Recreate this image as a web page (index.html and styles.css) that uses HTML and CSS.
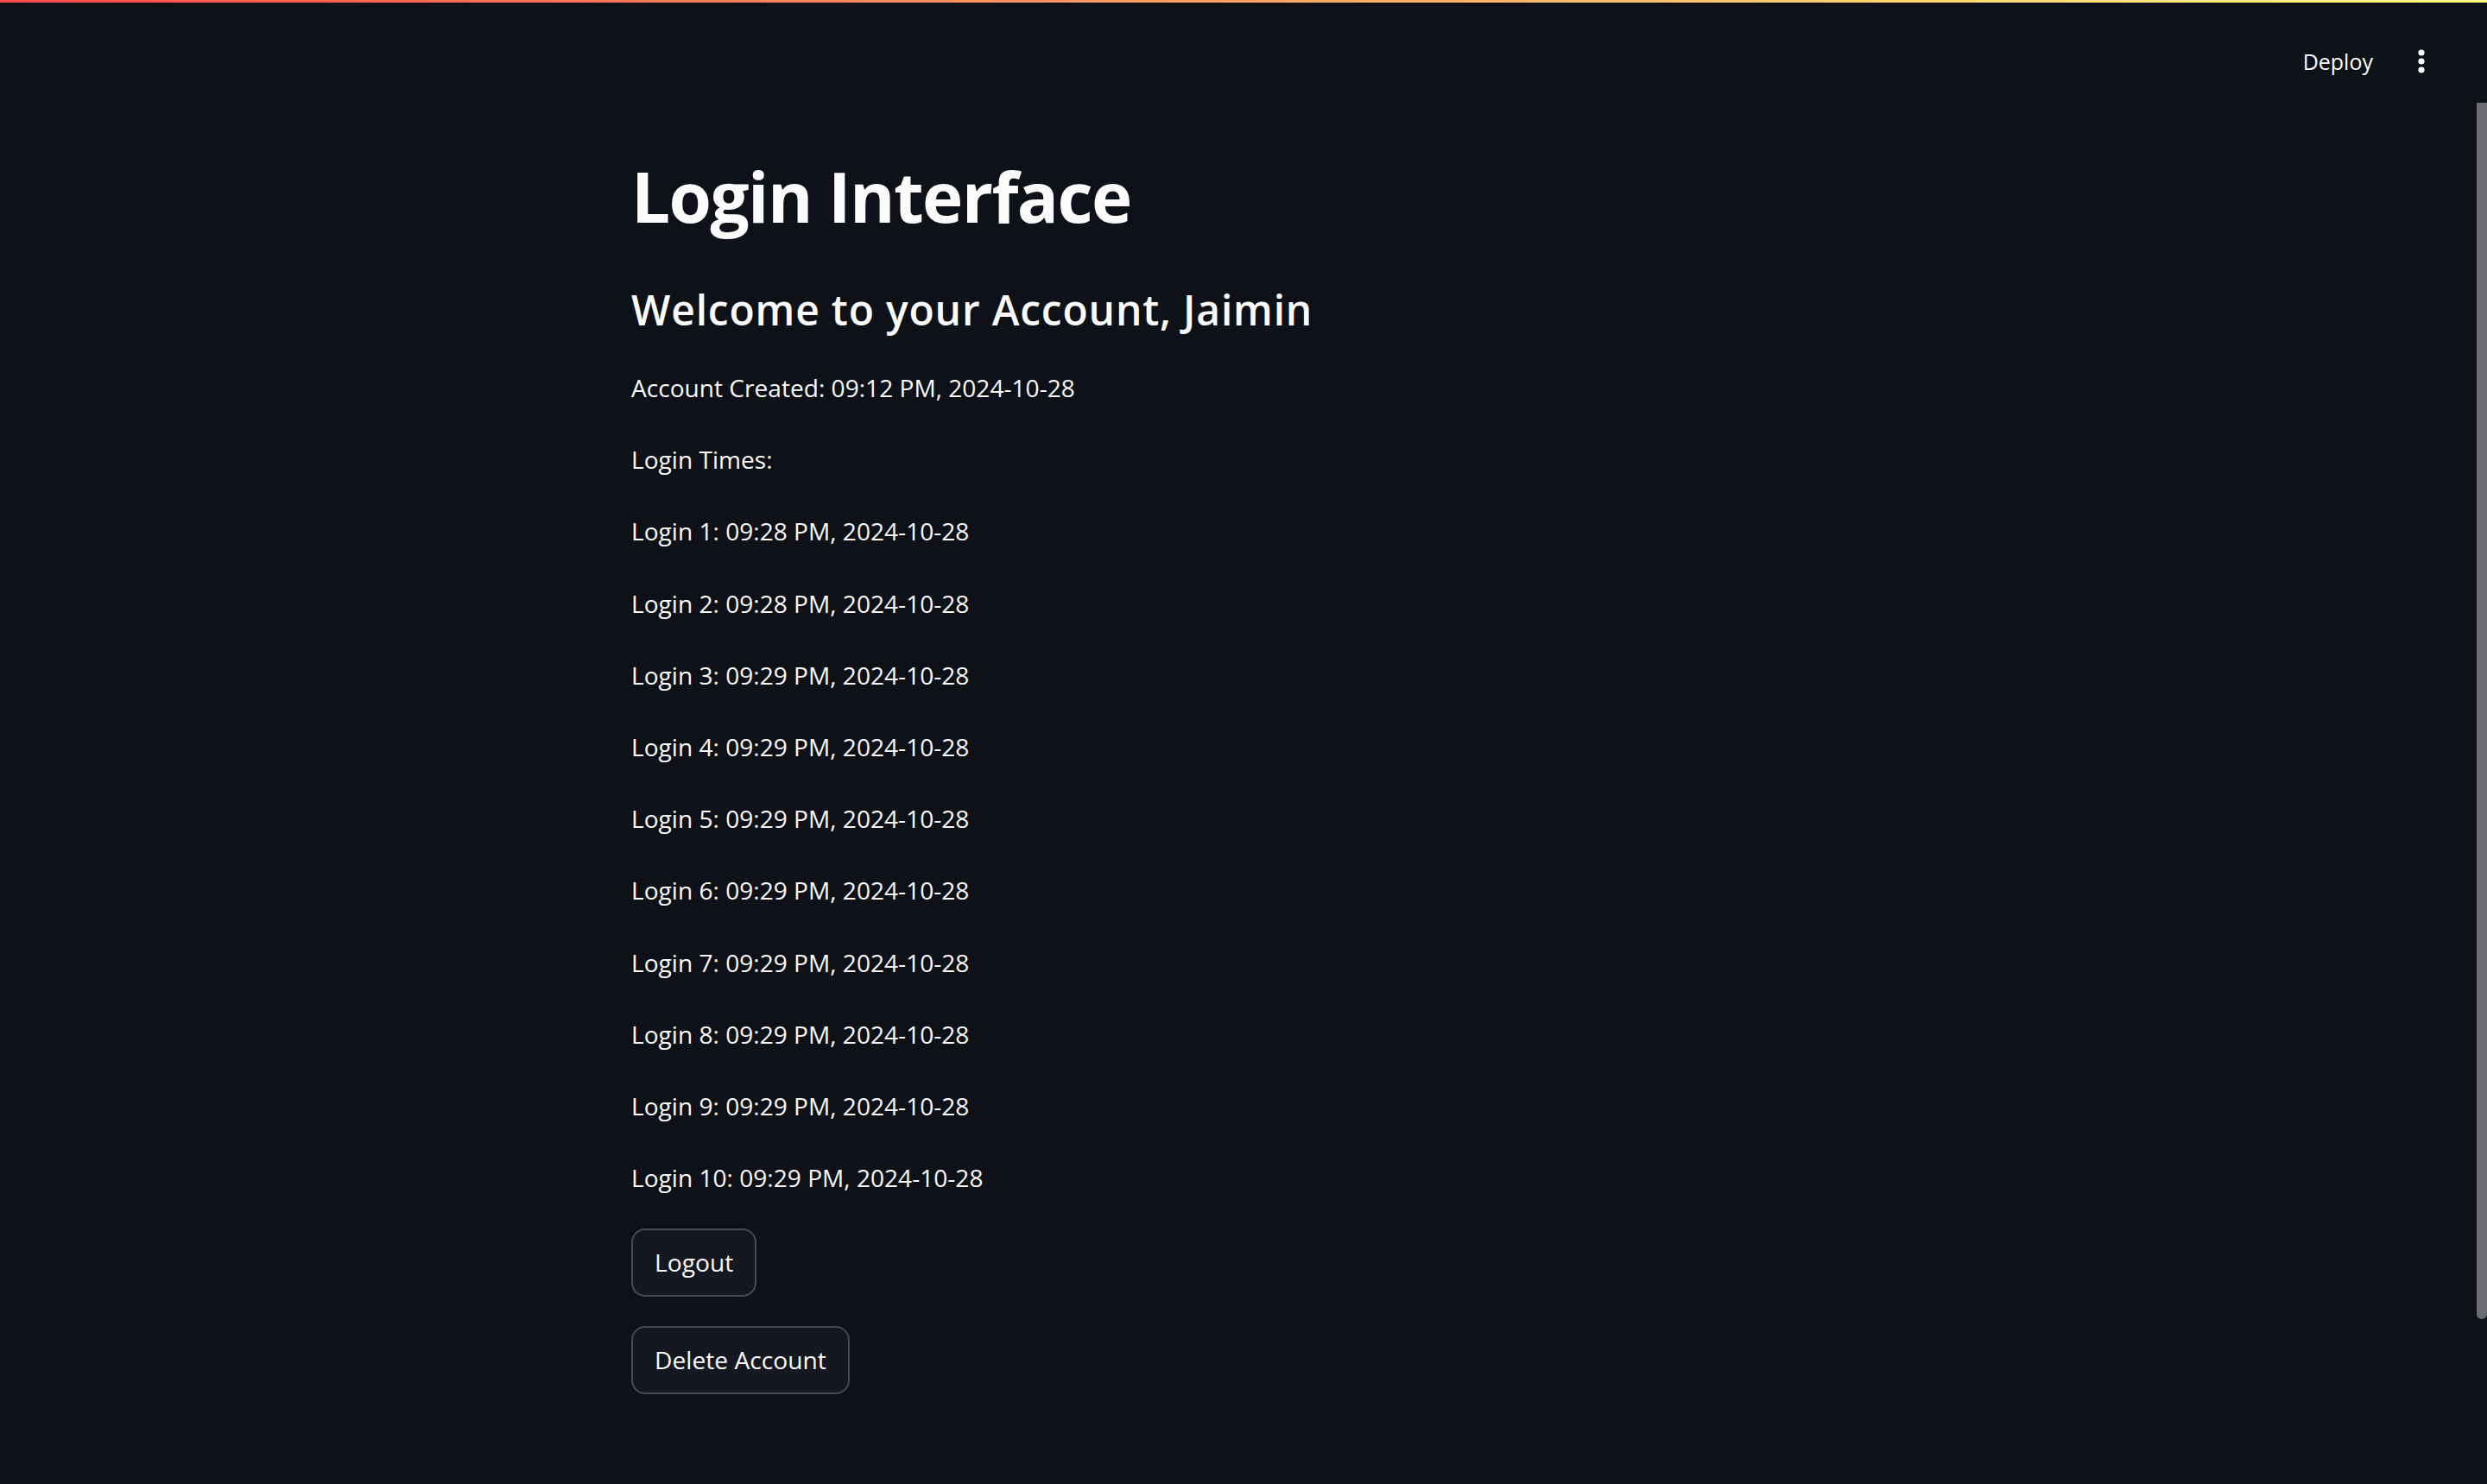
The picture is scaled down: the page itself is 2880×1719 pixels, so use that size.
FILE: index.html
```html
<!DOCTYPE html>
<html lang="en">
<head>
<meta charset="utf-8">
<title>Login Interface</title>
<link rel="stylesheet" href="styles.css">
</head>
<body>
<div class="app">
  <div class="decoration"></div>
  <header class="header">
    <span class="deploy">Deploy</span>
    <svg class="menu" width="24" height="36" viewBox="0 0 24 36" aria-hidden="true">
      <circle cx="12" cy="7" r="3.6" fill="#fafafa"/>
      <circle cx="12" cy="17" r="3.6" fill="#fafafa"/>
      <circle cx="12" cy="27" r="3.6" fill="#fafafa"/>
    </svg>
  </header>
  <main class="main">
    <h1 class="title">Login Interface</h1>
    <h2 class="subtitle">Welcome to your Account, Jaimin</h2>
    <p class="text">Account Created: 09:12 PM, 2024-10-28</p>
    <p class="text">Login Times:</p>
    <p class="text">Login 1: 09:28 PM, 2024-10-28</p>
    <p class="text">Login 2: 09:28 PM, 2024-10-28</p>
    <p class="text">Login 3: 09:29 PM, 2024-10-28</p>
    <p class="text">Login 4: 09:29 PM, 2024-10-28</p>
    <p class="text">Login 5: 09:29 PM, 2024-10-28</p>
    <p class="text">Login 6: 09:29 PM, 2024-10-28</p>
    <p class="text">Login 7: 09:29 PM, 2024-10-28</p>
    <p class="text">Login 8: 09:29 PM, 2024-10-28</p>
    <p class="text">Login 9: 09:29 PM, 2024-10-28</p>
    <p class="text">Login 10: 09:29 PM, 2024-10-28</p>
    <button class="btn btn-first" type="button">Logout</button>
    <button class="btn btn-second" type="button">Delete Account</button>
  </main>
  <div class="scrollbar"></div>
</div>
</body>
</html>
```

FILE: styles.css
```css
html, body {
  margin: 0;
  padding: 0;
  background: #0e1117;
}

body {
  width: 2880px;
  height: 1719px;
  overflow: hidden;
  color: #fafafa;
  font-family: "Open Sans", "Noto Sans", sans-serif;
}

.app {
  position: relative;
  width: 2880px;
  height: 1719px;
}

.decoration {
  height: 3px;
  background: linear-gradient(90deg, rgb(255, 75, 75), rgb(255, 253, 128));
}

.header {
  height: 117px;
  box-sizing: border-box;
  padding: 50px 64px 0 0;
  display: flex;
  justify-content: flex-end;
  align-items: flex-start;
  gap: 44px;
}

.deploy {
  font-size: 25px;
  line-height: 36px;
  color: #fafafa;
}

.menu {
  display: block;
  margin-top: 1px;
}

.main {
  display: flex;
  flex-direction: column;
  align-items: flex-start;
  gap: 32px;
  padding: 60px 0 0 731px;
}

.title {
  margin: 0 0 25px 0;
  font-size: 80px;
  line-height: 94px;
  font-weight: 700;
  letter-spacing: -1.6px;
}

.subtitle {
  margin: 0 0 6px 0;
  font-size: 48px;
  line-height: 55px;
  font-weight: 600;
  letter-spacing: 0.8px;
}

.text {
  margin: 0;
  font-size: 28.1px;
  line-height: 51.2px;
  font-weight: 400;
}

.btn {
  height: 79px;
  box-sizing: border-box;
  padding: 0 25px;
  border: 2px solid rgba(250, 250, 250, 0.22);
  border-radius: 16px;
  background: rgb(21, 24, 32);
  color: #fafafa;
  font-family: "Open Sans", "Noto Sans", sans-serif;
  font-size: 28.2px;
  line-height: 51px;
}

.btn-first {
  margin-top: 1px;
}

.btn-second {
  margin-top: 2px;
}

.scrollbar {
  position: absolute;
  top: 119px;
  right: 0;
  width: 12px;
  height: 1409px;
  background: #6b6c71;
  border-radius: 0 0 6px 6px;
}
```
